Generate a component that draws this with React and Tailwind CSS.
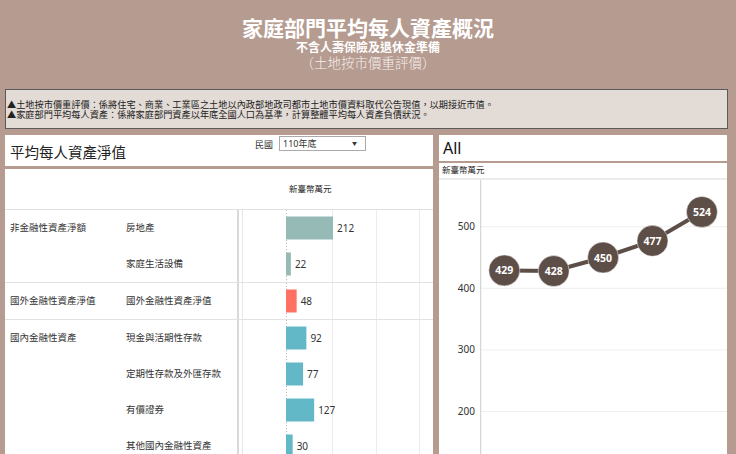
import React from 'react';

const SCALE = 47 / 212;

const groups = [
  {
    label: '非金融性資產淨額',
    color: '#96bab6',
    rows: [
      { name: '房地產', value: 212 },
      { name: '家庭生活設備', value: 22 },
    ],
  },
  {
    label: '國外金融性資產淨值',
    color: '#ff7163',
    rows: [{ name: '國外金融性資產淨值', value: 48 }],
  },
  {
    label: '國內金融性資產',
    color: '#63b8c7',
    rows: [
      { name: '現金與活期性存款', value: 92 },
      { name: '定期性存款及外匯存款', value: 77 },
      { name: '有價證券', value: 127 },
      { name: '其他國內金融性資產', value: 30 },
    ],
  },
];

const trend = [429, 428, 450, 477, 524];

const BarCell = ({ value, color }) => {
  const w = value * SCALE;
  return (
    <svg width="194" height="36" className="block">
      <line x1="3.5" y1="0" x2="3.5" y2="36" stroke="#e6e6e6" />
      {[93.5, 137.5, 180.5].map((x) => (
        <line key={x} x1={x} y1="0" x2={x} y2="36" stroke="#ececec" />
      ))}
      <line x1="47.5" y1="0" x2="47.5" y2="36" stroke="#bbbbbb" strokeDasharray="1 2" />
      <rect x="47" y="6.5" width={w} height="23" fill={color} />
      <text
        x={47 + w + 4}
        y="21.5"
        fontSize="10"
        fill="#333"
        fontFamily="'Noto Sans', sans-serif"
      >
        {value}
      </text>
    </svg>
  );
};

const LineChart = () => {
  const yOf = (v) => 46.7 + (500 - v) * 0.616;
  const pts = trend.map((v, i) => [65.3 + i * 49.4, yOf(v)]);
  return (
    <svg width="288" height="274" className="block">
      {[500, 400, 300, 200].map((t) => (
        <g key={t}>
          <line x1="42" y1={yOf(t)} x2="288" y2={yOf(t)} stroke="#efefef" />
          <text
            x="36"
            y={yOf(t) + 3.5}
            textAnchor="end"
            fontSize="10"
            fill="#333"
            fontFamily="'Noto Sans', sans-serif"
          >
            {t}
          </text>
        </g>
      ))}
      <line x1="42" y1={yOf(100)} x2="288" y2={yOf(100)} stroke="#efefef" />
      <line x1="41.7" y1="0" x2="41.7" y2="274" stroke="#cccccc" />
      <polyline
        points={pts.map((p) => p.join(',')).join(' ')}
        fill="none"
        stroke="#5e4e48"
        strokeWidth="4"
      />
      {pts.map(([x, y], i) => (
        <g key={i}>
          <circle cx={x} cy={y} r="15.5" fill="#5e4e48" stroke="#ffffff" strokeWidth="0.5" />
          <text
            x={x}
            y={y + 4}
            textAnchor="middle"
            fontSize="10.5"
            fontWeight="bold"
            fill="#ffffff"
            fontFamily="'Noto Sans', sans-serif"
          >
            {trend[i]}
          </text>
        </g>
      ))}
    </svg>
  );
};

export default function App() {
  return (
    <div className="w-[736px] h-[454px] overflow-hidden bg-[#b59b90] font-['Noto_Sans','Noto_Sans_CJK_TC',sans-serif] text-[#333]">
      {/* title */}
      <div className="pt-[14px] flex flex-col items-center text-white font-['Noto_Sans_CJK_TC',sans-serif]">
        <div className="text-[21px] leading-[26px] font-bold">家庭部門平均每人資產概況</div>
        <div className="text-[12px] leading-[14px] font-bold">不含人壽保險及退休金準備</div>
        <div className="text-[13.5px] leading-[16px] font-light text-[#f6efec]">（土地按市價重評價）</div>
      </div>

      {/* notes */}
      <div className="mt-[19px] mx-[5px] w-[723px] h-[40px] border border-[#5a5a5a] bg-[#e2dbd6] pl-px pt-[9px] text-[9.2px] leading-[10.4px] text-[#222] font-['Noto_Sans_CJK_TC',sans-serif]">
        <div>▲土地按市價重評價：係將住宅、商業、工業區之土地以內政部地政司都市土地市價資料取代公告現值，以期接近市值。</div>
        <div>▲家庭部門平均每人資產：係將家庭部門資產以年底全國人口為基準，計算整體平均每人資產負債狀況。</div>
      </div>

      {/* panels */}
      <div className="mt-[6px] ml-[5px] flex gap-[6px]">
        {/* left */}
        <div className="w-[428px] flex flex-col gap-[3px]">
          <div className="h-[31px] bg-white flex items-start">
            <div className="pl-[5px] pt-[7px] text-[14.5px] leading-[20px] text-[#222]">平均每人資產淨值</div>
            <div className="ml-auto mr-[67px] mt-px flex items-start gap-[6px]">
              <span className="text-[9px] leading-[16px] pt-px">民國</span>
              <div className="w-[87px] h-[15px] border border-[#aaaaaa] bg-white flex items-center justify-between px-[3px] text-[9px] leading-[13px]">
                <span>110年底</span>
                <span className="text-[5px] mr-[5px]">▼</span>
              </div>
            </div>
          </div>
          <div className="bg-white h-[300px]">
            <div className="h-[41px] border-b border-[#e2e2e2] pl-[284px] pt-[14px] text-[8.5px] leading-[12px] text-[#222]">新臺幣萬元</div>
            {groups.map((g) => (
              <div key={g.label} className="flex border-b border-[#e2e2e2]">
                <div className="w-[116px] h-[36px] pl-[5px] flex items-center text-[9.5px]">{g.label}</div>
                <div className="flex flex-col">
                  {g.rows.map((r) => (
                    <div key={r.name} className="flex h-[36px]">
                      <div className="w-[116px] pl-[5px] flex items-center text-[9.5px]">{r.name}</div>
                      <div className="border-l-2 border-[#d9d9d9]">
                        <BarCell value={r.value} color={g.color} />
                      </div>
                    </div>
                  ))}
                </div>
              </div>
            ))}
          </div>
        </div>

        {/* right */}
        <div className="w-[288px] flex flex-col gap-[2px]">
          <div className="h-[26px] bg-white pl-[4px] flex items-center text-[16px] text-[#111]">All</div>
          <div className="bg-white h-[300px]">
            <div className="h-[17px] border-b-2 border-[#ececec] pl-[3px] pt-px text-[8.5px] leading-[12px] text-[#222]">新臺幣萬元</div>
            <LineChart />
          </div>
        </div>
      </div>
    </div>
  );
}
